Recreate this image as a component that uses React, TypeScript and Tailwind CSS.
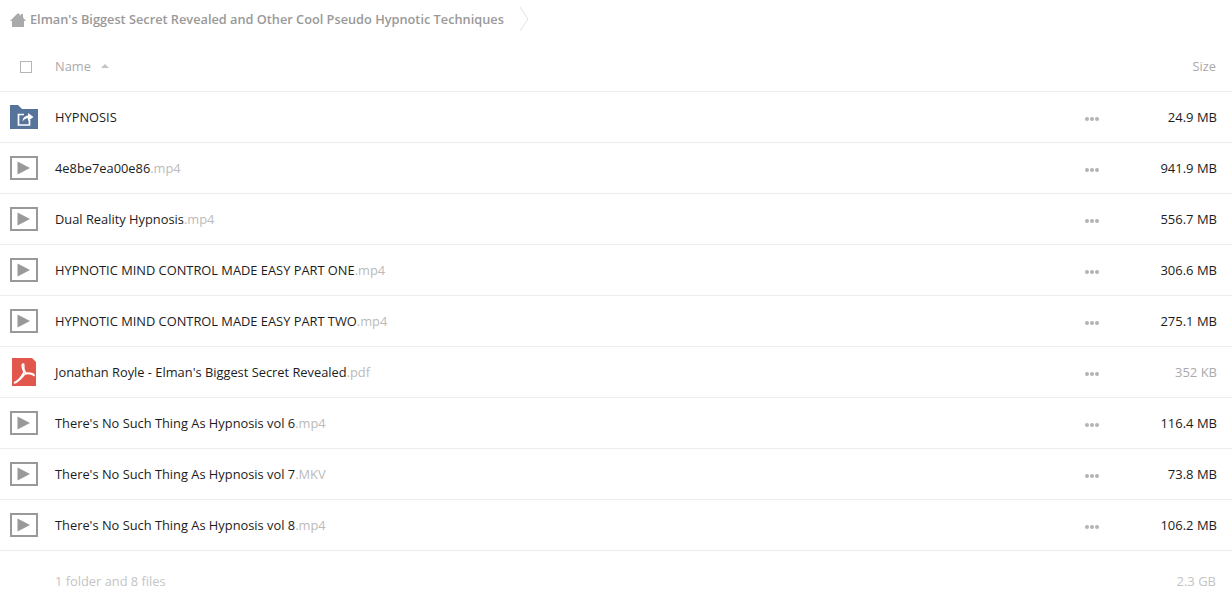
const rows: { name: string; ext: string; size: string; kind: "folder" | "video" | "pdf"; muted?: boolean }[] = [
  { name: "HYPNOSIS", ext: "", size: "24.9 MB", kind: "folder" },
  { name: "4e8be7ea00e86", ext: ".mp4", size: "941.9 MB", kind: "video" },
  { name: "Dual Reality Hypnosis", ext: ".mp4", size: "556.7 MB", kind: "video" },
  { name: "HYPNOTIC MIND CONTROL MADE EASY PART ONE", ext: ".mp4", size: "306.6 MB", kind: "video" },
  { name: "HYPNOTIC MIND CONTROL MADE EASY PART TWO", ext: ".mp4", size: "275.1 MB", kind: "video" },
  { name: "Jonathan Royle - Elman's Biggest Secret Revealed", ext: ".pdf", size: "352 KB", kind: "pdf", muted: true },
  { name: "There's No Such Thing As Hypnosis vol 6", ext: ".mp4", size: "116.4 MB", kind: "video" },
  { name: "There's No Such Thing As Hypnosis vol 7", ext: ".MKV", size: "73.8 MB", kind: "video" },
  { name: "There's No Such Thing As Hypnosis vol 8", ext: ".mp4", size: "106.2 MB", kind: "video" },
];

function FolderIcon() {
  return (
    <svg width="28" height="24" viewBox="0 0 28 24">
      <path d="M0 0H8L12 4H28V24H0Z" fill="#55739b" />
      <path d="M14 9.5H8.5V20H19.5V15" fill="none" stroke="#fff" strokeWidth="1.7" />
      <path d="M12.5 16.5C12.8 12.5 15.5 10.8 18 10.6V8L23.5 12L18 16V13.3C16 13.3 14 14.5 12.5 16.5Z" fill="#fff" />
    </svg>
  );
}

function VideoIcon() {
  return (
    <svg width="28" height="24" viewBox="0 0 28 24">
      <rect x="1" y="1" width="26" height="22" fill="none" stroke="#999" strokeWidth="2" />
      <path d="M7.5 5.5L20 12L7.5 18.5Z" fill="#999" />
    </svg>
  );
}

function PdfIcon() {
  return (
    <svg width="24" height="28" viewBox="0 0 24 28">
      <path d="M0 0H20L24 4V28H0Z" fill="#e2574c" />
      <path
        d="M11 6C9.5 6 10 10 12 14C10 18 6 23 2.5 24.5C2 25.3 4 25 6 23C8.5 21 11 18 13 16C16 15 19 15 22 17.5C22.7 16.5 20 14.5 13.5 15C12 12.5 11.5 9 11.8 6.8C11.9 6.2 11.5 6 11 6Z"
        fill="none"
        stroke="#fff"
        strokeWidth="1.5"
      />
    </svg>
  );
}

function Dots() {
  return (
    <span className="flex gap-[1px] mt-[3px]">
      <span className="w-1 h-1 rounded-full bg-[#b3b3b3]" />
      <span className="w-1 h-1 rounded-full bg-[#b3b3b3]" />
      <span className="w-1 h-1 rounded-full bg-[#b3b3b3]" />
    </span>
  );
}

export default function App() {
  return (
    <div className="w-[1232px] h-[602px] overflow-hidden bg-white text-[12.85px] font-['Open_Sans',sans-serif]">
      <div className="flex items-center h-[41px] pl-[10px]">
        <svg width="16" height="14" viewBox="0 0 16 14" className="mr-[4px] mt-[-2px]">
          <path d="M8 0L11 2.8V1H13V4.6L16 8H14V14H2V8H0Z" fill="#aaa" />
        </svg>
        <span className="font-semibold text-[#999] text-[12.75px] mt-[-2px]">Elman's Biggest Secret Revealed and Other Cool Pseudo Hypnotic Techniques</span>
        <svg width="10" height="26" viewBox="0 0 10 26" className="ml-[15px] mt-[-4px]">
          <path d="M1 1L9 13L1 25" fill="none" stroke="#e3e3e3" />
        </svg>
      </div>
      <div className="flex items-center h-[51px] border-b border-[#ececec] text-[#aaa]">
        <div className="w-[55px] pl-[20px] flex mt-[1px]">
          <span className="w-3 h-3 border border-[#b5b5b5] bg-white" />
        </div>
        <span className="mt-[2px]">Name</span>
        <svg width="8" height="4" viewBox="0 0 8 4" className="ml-[10px]">
          <path d="M4 0L8 4H0Z" fill="#c4c4c4" />
        </svg>
        <span className="ml-auto pr-[16px] mt-[2px]">Size</span>
      </div>
      {rows.map((r) => (
        <div key={r.name} className="flex items-center h-[51px] border-b border-[#ececec]">
          <div className="w-[55px] pl-[10px] flex">
            {r.kind === "folder" && <FolderIcon />}
            {r.kind === "video" && <VideoIcon />}
            {r.kind === "pdf" && (
              <span className="ml-[2px]">
                <PdfIcon />
              </span>
            )}
          </div>
          <span className="text-[#1c1c1c] mt-[2px]">
            {r.name}
            <span className="text-[#bbb]">{r.ext}</span>
          </span>
          <div className="ml-auto w-[38px] mr-[5px]">
            <Dots />
          </div>
          <span className={`w-[104px] pr-[15px] text-right text-[13px] mt-[2px] ${r.muted ? "text-[#aaa]" : "text-[#1c1c1c]"}`}>{r.size}</span>
        </div>
      ))}
      <div className="flex items-center h-[60px] text-[#c4c4c4]">
        <span className="pl-[55px] mt-[2px]">1 folder and 8 files</span>
        <span className="ml-auto pr-[16px] text-[13px] mt-[2px]">2.3 GB</span>
      </div>
    </div>
  );
}
